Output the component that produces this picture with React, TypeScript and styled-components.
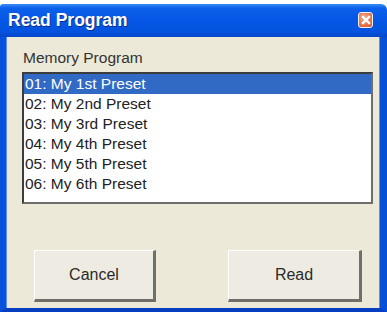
import React, { useState } from 'react';
import styled, { createGlobalStyle } from 'styled-components';

const GlobalStyle = createGlobalStyle`
  html, body {
    margin: 0;
    padding: 0;
    background: #ffffff;
  }
  body {
    font-family: "Liberation Sans", Arial, sans-serif;
  }
`;

const presets = [
  '01: My 1st Preset',
  '02: My 2nd Preset',
  '03: My 3rd Preset',
  '04: My 4th Preset',
  '05: My 5th Preset',
  '06: My 6th Preset',
];

const App: React.FC = () => {
  const [selected, setSelected] = useState(0);

  return (
    <>
      <GlobalStyle />
      <Page>
        <Window>
          <TitleBar>
            <Title>Read Program</Title>
            <CloseButton aria-label="Close">
              <svg width="10" height="10" viewBox="0 0 10 10">
                <path d="M2 2 L8 8 M8 2 L2 8" stroke="#fff" strokeWidth="2.4" strokeLinecap="square" />
              </svg>
            </CloseButton>
          </TitleBar>
          <Body>
            <Label>Memory Program</Label>
            <ListBox>
              {presets.map((p, i) => (
                <ListItem key={p} selected={i === selected} onClick={() => setSelected(i)}>
                  {p}
                </ListItem>
              ))}
            </ListBox>
            <ButtonRow>
              <DialogButton width={122}>Cancel</DialogButton>
              <DialogButton width={134}>Read</DialogButton>
            </ButtonRow>
          </Body>
        </Window>
      </Page>
    </>
  );
};

export default App;

// Styled components
const Page = styled.div`
  width: 387px;
  height: 314px;
  padding-top: 4px;
  box-sizing: border-box;
  background: #ffffff;
  overflow: hidden;
`;

const Window = styled.div`
  width: 387px;
  height: 308px;
  display: flex;
  flex-direction: column;
  border-radius: 3px 6px 0 0;
  overflow: hidden;
`;

const TitleBar = styled.div`
  height: 33px;
  flex-shrink: 0;
  display: flex;
  align-items: center;
  justify-content: space-between;
  padding: 0 14px 0 8px;
  background: linear-gradient(
    to bottom,
    #3a8cf8 0%,
    #0c61ea 12%,
    #0657e6 45%,
    #0453df 85%,
    #0746c8 100%
  );
`;

const Title = styled.span`
  color: #ffffff;
  font-weight: bold;
  font-size: 17.5px;
  text-shadow: 1px 1px 0 #0a2f8a;
  margin-top: -1px;
`;

const CloseButton = styled.div`
  width: 13px;
  height: 14px;
  margin-top: -2px;
  display: flex;
  align-items: center;
  justify-content: center;
  border: 1px solid #f4f0ee;
  border-radius: 3px;
  background: radial-gradient(circle at 40% 35%, #f4ae90 0%, #e8764e 55%, #d4552f 100%);
`;

const Body = styled.div`
  flex: 1;
  display: flex;
  flex-direction: column;
  background: #ece9d8;
  border-left: 6px solid #0652dc;
  border-right: 7px solid #0650d8;
  border-bottom: 4px solid #063fc2;
  box-shadow: inset 1px 0 0 #5c8ff0, inset -1px 0 0 #5c8ff0;
  padding: 12px 7px 0 16px;
`;

const Label = styled.div`
  font-size: 15.5px;
  line-height: 18px;
  color: #333333;
  margin-bottom: 5px;
  padding-left: 1px;
`;

const ListBox = styled.div`
  height: 132px;
  box-sizing: border-box;
  background: #ffffff;
  border-style: solid;
  border-width: 2px;
  border-color: #3c3c3c #6e6e6a #6e6e6a #3c3c3c;
  display: flex;
  flex-direction: column;
`;

const ListItem = styled.div<{ selected: boolean }>`
  height: 20px;
  line-height: 20px;
  font-size: 15.5px;
  padding-left: 1px;
  color: ${({ selected }) => (selected ? '#ffffff' : '#222222')};
  background: ${({ selected }) => (selected ? '#316ac5' : 'transparent')};
  cursor: default;
`;

const ButtonRow = styled.div`
  display: flex;
  gap: 72px;
  margin-top: 46px;
  padding-left: 12px;
`;

const DialogButton = styled.button<{ width: number }>`
  width: ${({ width }) => width}px;
  height: 52px;
  font-family: "Liberation Sans", Arial, sans-serif;
  font-size: 16px;
  color: #2a2a2a;
  background: #eeece2;
  border-style: solid;
  border-width: 1px 3px 3px 1px;
  border-color: #ffffff #6f6e68 #6f6e68 #ffffff;
  padding: 0;
  cursor: default;
`;
